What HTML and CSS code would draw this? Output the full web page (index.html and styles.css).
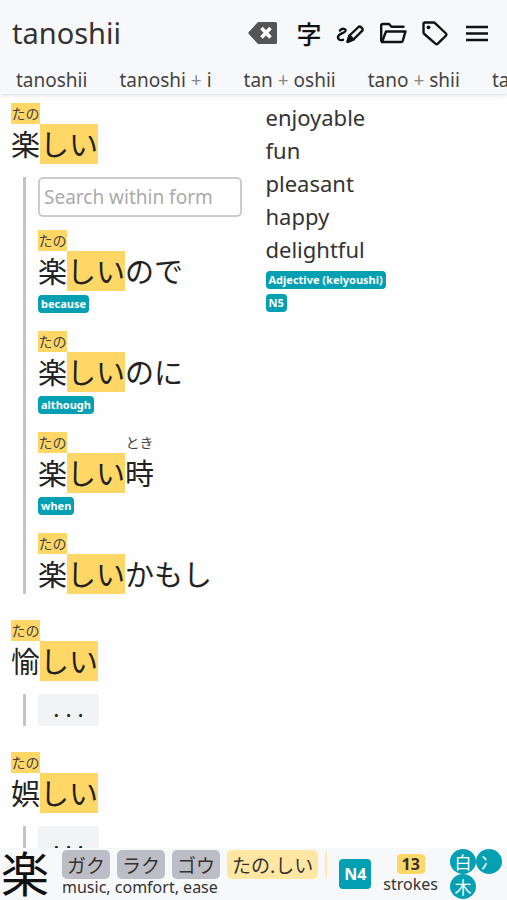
FILE: index.html
```html
<!DOCTYPE html>
<html lang="en">
<head>
<meta charset="utf-8">
<meta name="viewport" content="width=device-width, initial-scale=1">
<title>tanoshii</title>
<link rel="stylesheet" href="styles.css">
</head>
<body>
<header class="top">
  <div class="search">
    <input class="query" type="text" value="tanoshii" aria-label="Search">
    <button class="tool clear" type="button" aria-label="Clear">
      <svg width="30" height="24" viewBox="0 0 30 24"><path d="M10 1h17.500a1.500 1.500 0 0 1 1.500 1.500v19a1.500 1.500 0 0 1-1.500 1.500H10L1 13.200a1.600 1.600 0 0 1 0-2.400z" fill="#555"/><path d="M13.500 7l9 9.500M22.500 7l-9 9.500" stroke="#fff" stroke-width="3.600"/></svg>
    </button>
    <button class="tool glyph" type="button" lang="ja">字</button>
    <button class="tool" type="button" aria-label="Draw">
      <svg width="30" height="24" viewBox="0 0 30 24" fill="none" stroke="#111" stroke-width="2.400" stroke-linejoin="round" stroke-linecap="round"><path d="M4 9.500c2-2.500 5.800-2 5.600.2-.3 2.500-5.800 2.300-7.300 5.300-1.200 2.700 1.400 5 4.700 3.800"/><path d="M13.500 14.500L22.500 6q1.200-1 2.300 0l1.500 1.400q1 1.200 0 2.300L17.500 18.500 11.500 20.800z"/><path d="M13.500 14.500l4 4-5.900 2.300z" fill="#111"/></svg>
    </button>
    <button class="tool" type="button" aria-label="Folders">
      <svg width="28" height="24" viewBox="0 0 28 24" fill="none" stroke="#111" stroke-width="2.400" stroke-linejoin="round" stroke-linecap="round"><path d="M3 20.800L2.200 19.500V4.500q0-1.500 1.500-1.500h6.300l2.500 2.800H24.500"/><path d="M3 21L7 10.500h19.500l-2.800 9.300q-.4 1.200-1.700 1.200z"/></svg>
    </button>
    <button class="tool" type="button" aria-label="Tags">
      <svg width="28" height="26" viewBox="0 0 28 26" fill="none" stroke="#111" stroke-width="2.400" stroke-linejoin="round"><path d="M2.500 4q0-1.500 1.500-1.500h8.500q1 0 1.800.8L25 13.500q1 1 0 2.200L16.800 23.600q-1.200 1.200-2.400 0L3.300 14q-.8-.8-.8-1.800z"/><circle cx="7.500" cy="7.300" r="1.900" fill="#111" stroke="none"/></svg>
    </button>
    <button class="tool" type="button" aria-label="Menu">
      <svg width="24" height="20" viewBox="0 0 24 20" stroke="#111" stroke-width="2.600"><path d="M1 4h22M1 10.500h22M1 17h22"/></svg>
    </button>
  </div>
  <nav class="splits" aria-label="Splits">
    <a href="#">tanoshii</a>
    <a href="#">tanoshi <i>+</i> i</a>
    <a href="#">tan <i>+</i> oshii</a>
    <a href="#">tano <i>+</i> shii</a>
    <a href="#">tanos <i>+</i> hii</a>
  </nav>
</header>

<main class="results">
  <div class="words" lang="ja">
    <section class="entry">
      <div class="word"><span class="rt hit">たの</span><span class="rb">楽</span><span class="kana hit">しい</span></div>
      <div class="forms">
        <input class="filter" type="text" placeholder="Search within form" aria-label="Search within form">
        <div class="form"><div class="word"><span class="rt hit">たの</span><span class="rb">楽</span><span class="kana hit">しい</span><span class="kana">ので</span></div><span class="badge" lang="en">because</span></div>
        <div class="form"><div class="word"><span class="rt hit">たの</span><span class="rb">楽</span><span class="kana hit">しい</span><span class="kana">のに</span></div><span class="badge" lang="en">although</span></div>
        <div class="form"><div class="word"><span class="rt hit">たの</span><span class="rb">楽</span><span class="kana hit">しい</span><span class="rt">とき</span><span class="rb">時</span></div><span class="badge" lang="en">when</span></div>
        <div class="form"><div class="word"><span class="rt hit">たの</span><span class="rb">楽</span><span class="kana hit">しい</span><span class="kana">かもし</span></div></div>
      </div>
    </section>
    <section class="entry">
      <div class="word"><span class="rt hit">たの</span><span class="rb">愉</span><span class="kana hit">しい</span></div>
      <div class="forms"><button class="more" type="button" aria-label="More forms">. . .</button></div>
    </section>
    <section class="entry">
      <div class="word"><span class="rt hit">たの</span><span class="rb">娯</span><span class="kana hit">しい</span></div>
      <div class="forms"><button class="more" type="button" aria-label="More forms">. . .</button></div>
    </section>
  </div>
  <div class="meanings">
    <ul>
      <li>enjoyable</li>
      <li>fun</li>
      <li>pleasant</li>
      <li>happy</li>
      <li>delightful</li>
    </ul>
    <span class="badge">Adjective (keiyoushi)</span>
    <span class="badge">N5</span>
  </div>
</main>

<footer class="kanji">
  <span class="big" lang="ja">楽</span>
  <div class="info">
    <div class="readings" lang="ja">
      <span class="on">ガク</span><span class="on">ラク</span><span class="on">ゴウ</span><span class="kun">たの.しい</span><span class="kun next"></span>
    </div>
    <div class="gloss">music, comfort, ease</div>
  </div>
  <span class="level">N4</span>
  <div class="strokes"><b>13</b><span>strokes</span></div>
  <div class="parts" lang="ja"><span>白</span><span>冫</span><span>木</span></div>
</footer>
</body>
</html>
```
FILE: styles.css
```css
* {
  box-sizing: border-box;
}

body {
  margin: 0;
  height: 100vh;
  display: flex;
  flex-direction: column;
  overflow: hidden;
  background: #fefefe;
  color: #333;
  font-family: "Noto Sans", "Noto Sans CJK JP", sans-serif;
}

button,
input {
  font: inherit;
  color: inherit;
}

/* Header */
.top {
  flex: none;
  background: #f7f8fa;
  box-shadow: 0 1px 4px rgba(0, 0, 0, 0.15);
  z-index: 1;
}

.search {
  display: flex;
  align-items: center;
  height: 66px;
  padding: 0 9px 0 12px;
}

.query {
  flex: 1;
  min-width: 0;
  height: 42px;
  padding: 0 0 2px;
  border: 0;
  outline: 0;
  background: none;
  font-size: 29px;
}

.tool {
  flex: none;
  display: flex;
  align-items: center;
  justify-content: center;
  width: 42px;
  height: 42px;
  padding: 0;
  border: 0;
  background: none;
}

.clear {
  margin-right: 4px;
}

.glyph {
  color: #111;
  font-family: "Noto Sans CJK JP", sans-serif;
  font-size: 25px;
  font-weight: 500;
  line-height: 40px;
}

.splits {
  display: flex;
  overflow: hidden;
  height: 28px;
  white-space: nowrap;
}

.splits a {
  flex: none;
  padding: 0 16px;
  color: #444;
  font-size: 19px;
  line-height: 28px;
  text-decoration: none;
}

.splits i {
  color: #888;
  font-style: normal;
}

/* Results */
.results {
  flex: 1;
  min-height: 0;
  overflow: hidden;
  display: grid;
  grid-template-columns: 1fr 1fr;
  gap: 24px;
  padding: 7px 11px 0;
}

.words {
  padding-top: 2px;
}

.entry {
  margin-bottom: 26px;
}

.word {
  display: grid;
  grid-template-rows: 21px 40px;
  grid-auto-flow: column;
  justify-content: start;
  color: #222;
  font-family: "Noto Sans CJK JP", sans-serif;
  font-size: 29px;
  line-height: 38px;
}

.rt {
  grid-row: 1;
  color: #444;
  font-size: 14px;
  line-height: 20px;
  text-align: center;
}

.rb,
.kana {
  grid-row: 2;
}

.hit {
  background: #ffd766;
}

.forms {
  margin: 13px 0 0 12px;
  padding-left: 12px;
  border-left: 3px solid #c4c4c4;
}

.filter {
  display: block;
  width: 100%;
  height: 40px;
  margin-bottom: 13px;
  padding: 0 4px;
  border: 2px solid #ccc;
  border-radius: 5px;
  background: #fff;
  font-size: 19px;
}

.filter::placeholder {
  color: #aaa;
}

.form + .form {
  margin-top: 18px;
}

.badge {
  display: block;
  width: fit-content;
  margin-top: 4px;
  padding: 0 3px;
  border-radius: 4px;
  background: #039fb3;
  color: #fff;
  font-family: "Noto Sans", sans-serif;
  font-size: 11px;
  font-weight: 700;
  line-height: 18px;
}

.meanings .badge {
  margin-top: 5px;
}

.more {
  display: block;
  width: 61px;
  height: 32px;
  padding: 0 0 4px;
  border: 0;
  border-radius: 4px;
  background: #f1f3f4;
  color: #222;
  font-family: "Noto Sans", sans-serif;
  font-size: 23px;
  line-height: 28px;
}

.meanings ul {
  margin: 0;
  padding: 0;
  list-style: none;
  font-size: 22px;
  line-height: 33px;
}

/* Kanji bar */
.kanji {
  flex: none;
  display: flex;
  align-items: center;
  height: 52px;
  padding: 0 5px 0 1px;
  background: #f7f8fa;
}

.big {
  flex: none;
  width: 49px;
  padding-bottom: 6px;
  color: #111;
  font-family: "Noto Sans CJK JP", sans-serif;
  font-size: 48px;
  line-height: 46px;
}

.info {
  flex: 1;
  min-width: 0;
  margin: 0 12px;
  padding-bottom: 3px;
}

.readings {
  display: flex;
  gap: 7px;
  overflow: hidden;
  font-family: "Noto Sans CJK JP", sans-serif;
  font-size: 19px;
  line-height: 29px;
  white-space: nowrap;
}

.readings span {
  flex: none;
  padding: 0 5px;
  border-radius: 5px;
}

.on {
  background: #bdbec5;
}

.kun {
  background: #ffe7a3;
}

.readings .next {
  width: 90px;
}

.gloss {
  font-size: 16px;
  line-height: 16px;
  white-space: nowrap;
}

.level {
  flex: none;
  width: 32px;
  border-radius: 4px;
  background: #039fb3;
  color: #fff;
  font-size: 16px;
  font-weight: 700;
  line-height: 30px;
  text-align: center;
}

.strokes {
  flex: none;
  display: flex;
  flex-direction: column;
  align-items: center;
  margin: 0 12px;
  font-size: 16px;
  line-height: 20px;
}

.strokes b {
  padding: 0 5px;
  border-radius: 4px;
  background: #ffd766;
}

.parts {
  flex: none;
  display: grid;
  grid-template-columns: 26px 26px;
}

.parts span {
  width: 26px;
  border-radius: 50%;
  background: #039fb3;
  color: #fff;
  font-family: "Noto Sans CJK JP", sans-serif;
  font-size: 17px;
  line-height: 25px;
  text-align: center;
}
```
